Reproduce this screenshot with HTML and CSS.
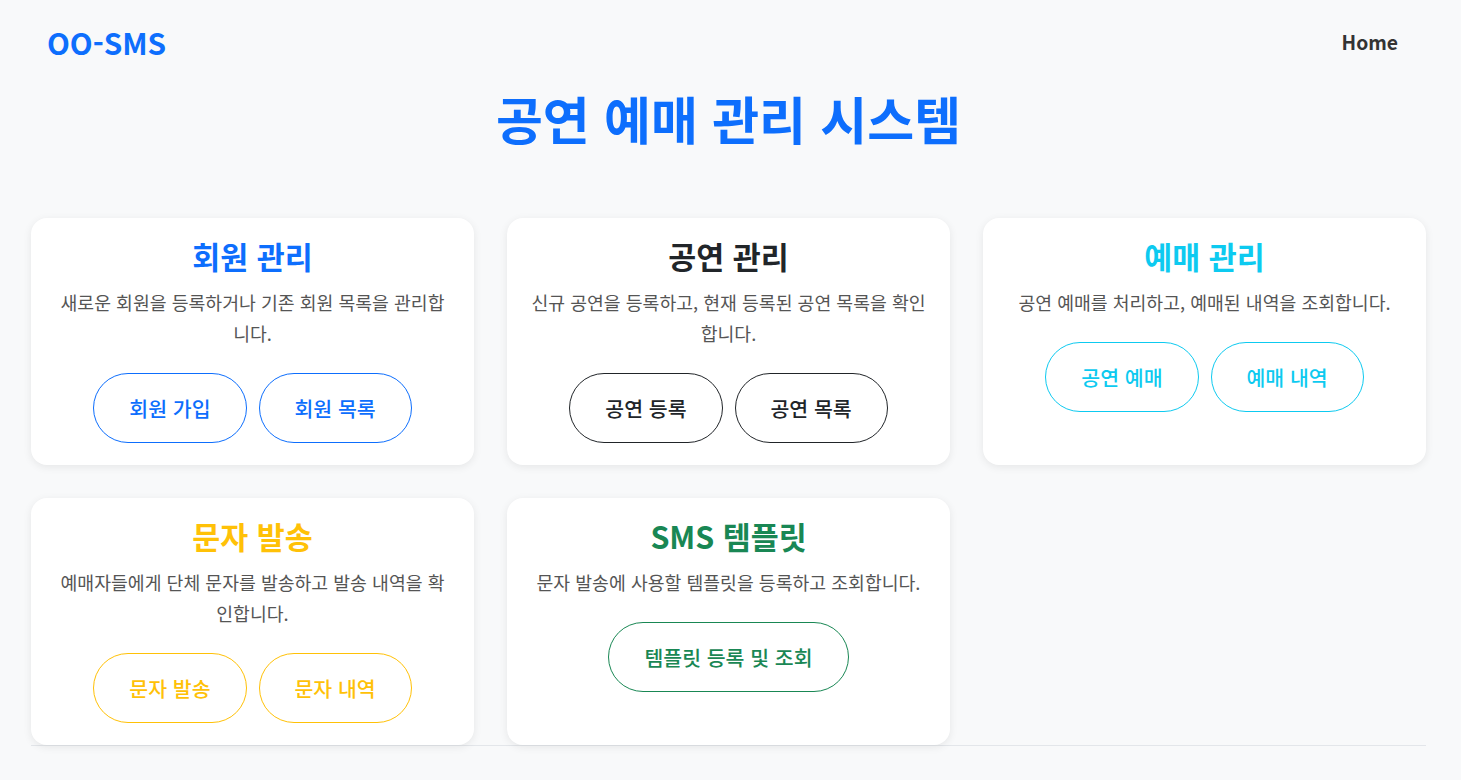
FILE: index.html
```html
<!DOCTYPE html>
<html lang="ko">
<head>
<meta charset="utf-8">
<title>OO-SMS</title>
<link rel="stylesheet" href="styles.css">
</head>
<body>
<div class="page">
  <header class="topbar">
    <a class="brand" href="#">OO-SMS</a>
    <nav><a class="nav-link" href="#">Home</a></nav>
  </header>
  <h1 class="page-title">공연 예매 관리 시스템</h1>
  <main class="grid">
    <section class="card primary">
      <h2 class="card-title">회원 관리</h2>
      <p class="card-text">새로운 회원을 등록하거나 기존 회원 목록을 관리합니다.</p>
      <div class="actions"><a class="btn" href="#">회원 가입</a><a class="btn" href="#">회원 목록</a></div>
    </section>
    <section class="card dark">
      <h2 class="card-title">공연 관리</h2>
      <p class="card-text">신규 공연을 등록하고, 현재 등록된 공연 목록을 확인합니다.</p>
      <div class="actions"><a class="btn" href="#">공연 등록</a><a class="btn" href="#">공연 목록</a></div>
    </section>
    <section class="card info">
      <h2 class="card-title">예매 관리</h2>
      <p class="card-text">공연 예매를 처리하고, 예매된 내역을 조회합니다.</p>
      <div class="actions"><a class="btn" href="#">공연 예매</a><a class="btn" href="#">예매 내역</a></div>
    </section>
    <section class="card warning">
      <h2 class="card-title">문자 발송</h2>
      <p class="card-text">예매자들에게 단체 문자를 발송하고 발송 내역을 확인합니다.</p>
      <div class="actions"><a class="btn" href="#">문자 발송</a><a class="btn" href="#">문자 내역</a></div>
    </section>
    <section class="card success">
      <h2 class="card-title">SMS 템플릿</h2>
      <p class="card-text">문자 발송에 사용할 템플릿을 등록하고 조회합니다.</p>
      <div class="actions"><a class="btn" href="#">템플릿 등록 및 조회</a></div>
    </section>
  </main>
  <footer class="footer"></footer>
</div>
</body>
</html>
```

FILE: styles.css
```css
* { box-sizing: border-box; }
html, body { margin: 0; padding: 0; }
body {
  background: #f8f9fa;
  font-family: "Noto Sans CJK KR", "Noto Sans", sans-serif;
  color: #212529;
}
a { text-decoration: none; }
.page {
  padding: 0 35px 0 31px;
}
.topbar {
  display: flex;
  justify-content: space-between;
  align-items: center;
  height: 84px;
  padding: 0 16px;
}
.brand {
  color: #0d6efd;
  font-size: 29.7px;
  font-weight: 700;
}
.nav-link {
  color: #333;
  font-size: 19.3px;
  font-weight: 600;
  padding: 8px 12px;
}
.page-title {
  margin: 2px 0 68px;
  text-align: center;
  color: #0d6efd;
  font-size: 51px;
  font-weight: 700;
  line-height: 64px;
}
.grid {
  display: grid;
  grid-template-columns: repeat(3, 1fr);
  gap: 33px;
}
.card {
  background: #fff;
  border-radius: 16px;
  box-shadow: 0 2px 8px rgba(0, 0, 0, 0.08);
  padding: 21px 24px 22px;
  text-align: center;
}
.card-title {
  margin: 0 0 14px;
  font-size: 30.4px;
  font-weight: 700;
  line-height: 34px;
}
.card-text {
  margin: 0 0 24px;
  font-size: 18.3px;
  line-height: 31px;
  color: #555;
}
.actions {
  display: flex;
  justify-content: center;
  gap: 12px;
}
.btn {
  display: inline-block;
  padding: 19px 35px;
  border: 1px solid currentColor;
  border-radius: 999px;
  background: #fff;
  font-size: 20.5px;
  font-weight: 500;
  line-height: 30px;
}
.primary .card-title, .primary .btn { color: #0d6efd; }
.dark .card-title, .dark .btn { color: #212529; }
.info .card-title, .info .btn { color: #0dcaf0; }
.warning .card-title, .warning .btn { color: #ffc107; }
.success .card-title, .success .btn { color: #198754; }
.footer {
  border-top: 1px solid #e3e6ea;
  height: 40px;
}
```
